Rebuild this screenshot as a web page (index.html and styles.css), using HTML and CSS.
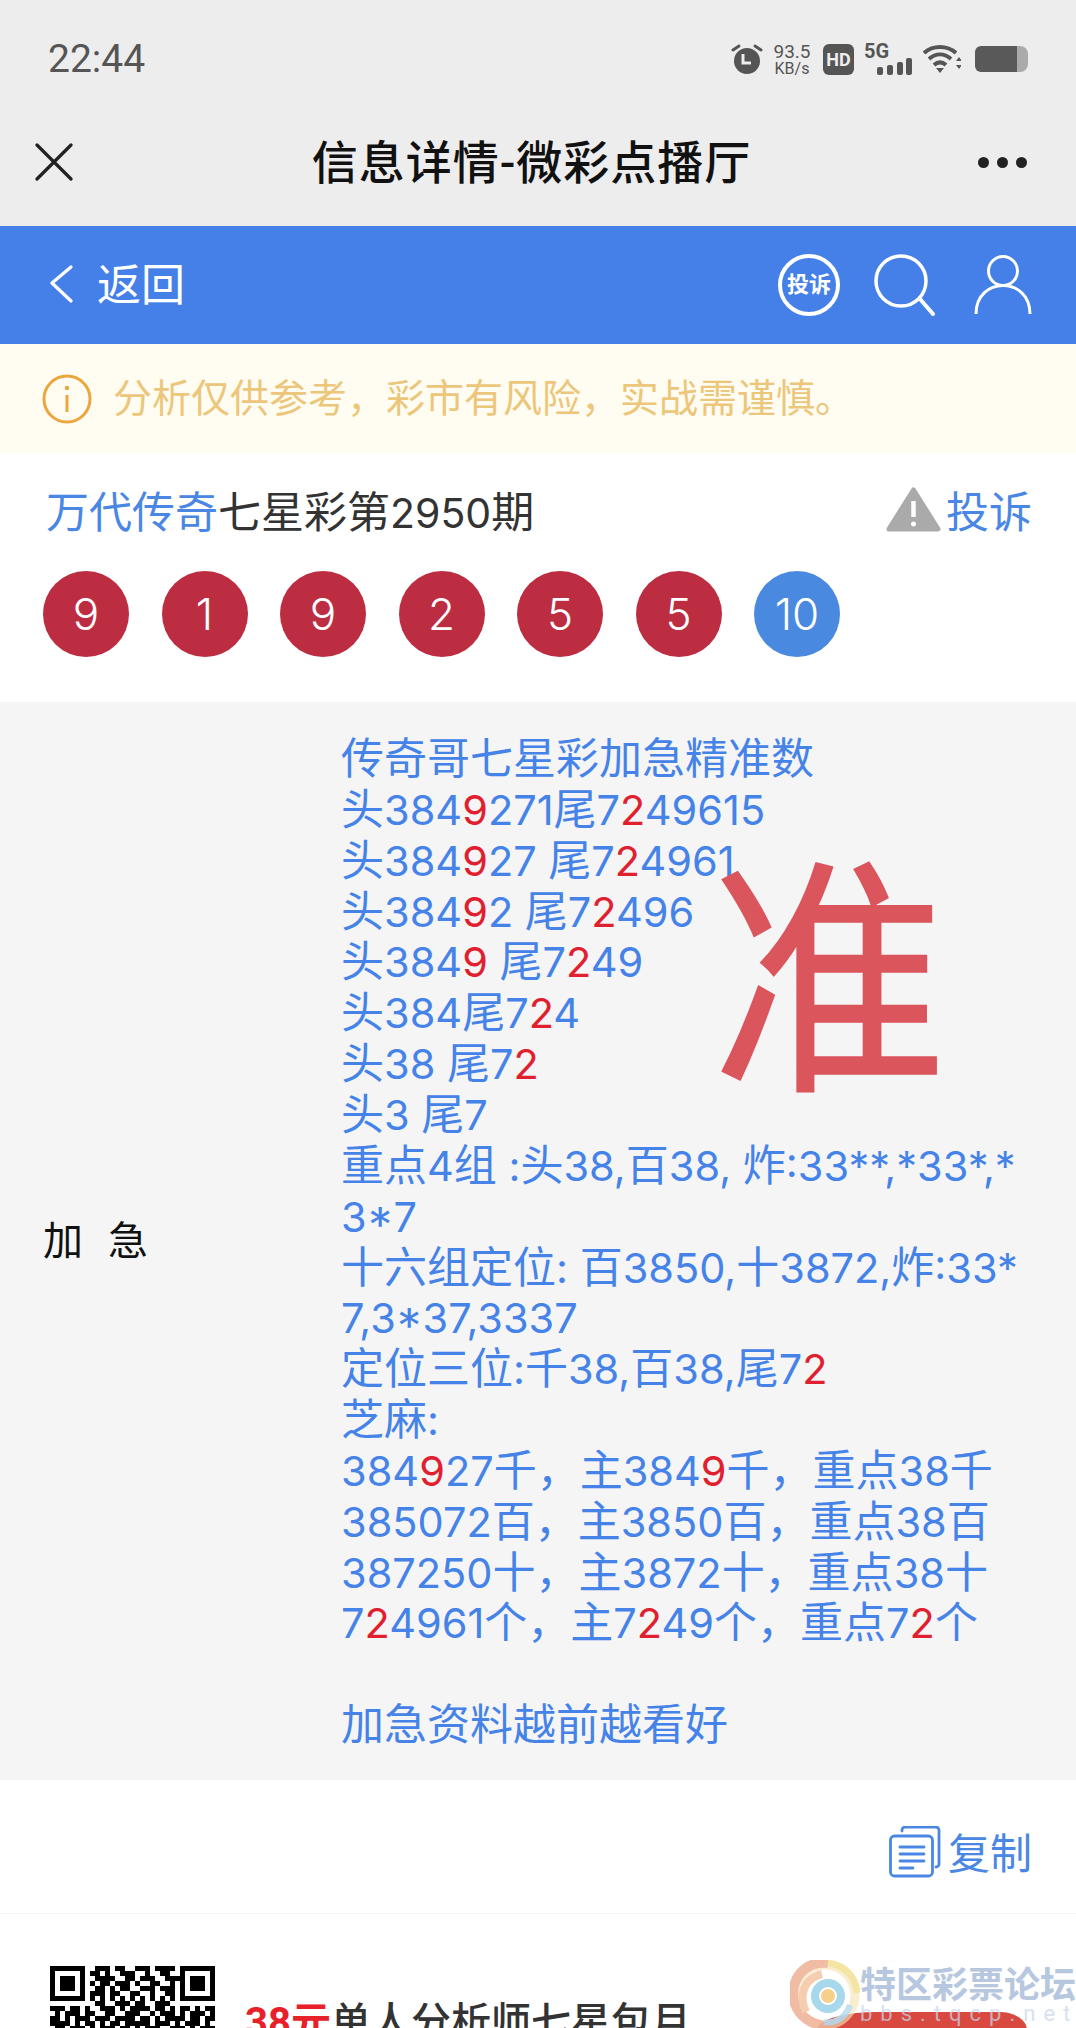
FILE: index.html
```html
<!DOCTYPE html>
<html lang="zh">
<head>
<meta charset="utf-8">
<title>信息详情-微彩点播厅</title>
<link rel="stylesheet" href="styles.css">
</head>
<body>
<div class="page">
  <header class="top">
    <div class="status">
      <span class="time">22:44</span>
      <div class="status-icons">
        <svg class="ic-alarm" width="32" height="32" viewBox="0 0 32 32"><circle cx="16" cy="18" r="13" fill="#555"/><path d="M12 11v9h8" fill="none" stroke="#eee" stroke-width="3"/><path d="M2 7l6-4M30 7l-6-4" stroke="#555" stroke-width="3" stroke-linecap="round"/></svg>
        <div class="speed"><span class="speed-num">93.5</span><span class="speed-unit">KB/s</span></div>
        <span class="hd">HD</span>
        <div class="sig">
          <span class="sig-5g">5G</span>
          <svg class="sig-bars" width="35" height="17" viewBox="0 0 35 17"><g fill="#555"><rect x="0" y="9" width="6" height="8" rx="2"/><rect x="10" y="7" width="6" height="10" rx="2"/><rect x="20" y="4" width="6" height="13" rx="2"/><rect x="29" y="0" width="6" height="17" rx="2"/></g></svg>
        </div>
        <svg class="ic-wifi" width="38" height="30" viewBox="0 0 38 30"><g fill="none" stroke="#555" stroke-width="4"><path d="M1 9C10 1 24 1 33 9"/><path d="M6 15C13 9 21 9 28 15"/><path d="M11 21C15 17.500 19 17.500 23 21"/></g><path d="M13 24h8l-4 5z" fill="#555"/><path d="M36 13l-3 4h6zM36 25l-3-4h6z" fill="#555"/></svg>
        <div class="battery"><div class="battery-fill"></div><div class="battery-tip"></div></div>
      </div>
    </div>
    <div class="nav">
      <svg class="ic-close" width="38" height="38" viewBox="0 0 38 38"><path d="M2 2l34 34M36 2L2 36" stroke="#222" stroke-width="3.200" stroke-linecap="round"/></svg>
      <h1 class="nav-title">信息详情-微彩点播厅</h1>
      <div class="dots"><i></i><i></i><i></i></div>
    </div>
  </header>

  <div class="bar">
    <svg class="ic-back" width="24" height="38" viewBox="0 0 24 38"><path d="M22 2L3 18l19 18" fill="none" stroke="#fff" stroke-width="3.200" stroke-linecap="round" stroke-linejoin="round"/></svg>
    <span class="back-text">返回</span>
    <div class="bar-actions">
      <span class="report-badge">投诉</span>
      <svg class="ic-search" width="62" height="62" viewBox="0 0 62 62"><circle cx="27" cy="27" r="25" fill="none" stroke="#fff" stroke-width="3.500"/><path d="M46 45l13 15" stroke="#fff" stroke-width="4" stroke-linecap="round"/></svg>
      <svg class="ic-user" width="58" height="62" viewBox="0 0 58 62"><circle cx="29" cy="17" r="14.500" fill="none" stroke="#fff" stroke-width="3"/><path d="M2 60C2 22 56 22 56 60" fill="none" stroke="#fff" stroke-width="3"/></svg>
    </div>
  </div>

  <div class="notice">
    <svg width="50" height="50" viewBox="0 0 50 50"><circle cx="25" cy="25" r="23" fill="none" stroke="#eda63d" stroke-width="3"/><circle cx="25" cy="14" r="2.200" fill="#eda63d"/><path d="M25 21v17" stroke="#eda63d" stroke-width="3"/></svg>
    <span class="notice-text">分析仅供参考，彩市有风险，实战需谨慎。</span>
  </div>

  <section class="head">
    <div class="head-row">
      <div class="head-title"><span class="blue">万代传奇</span>七星彩第<span class="num">2950</span>期</div>
      <div class="report">
        <svg width="55" height="45" viewBox="0 0 55 45"><path d="M27.500 3L52 42H3z" fill="#aaa" stroke="#aaa" stroke-width="5" stroke-linejoin="round"/><path d="M27.500 14v16" stroke="#fff" stroke-width="4.500"/><circle cx="27.500" cy="37" r="2.500" fill="#fff"/></svg>
        <span class="report-text">投诉</span>
      </div>
    </div>
    <div class="balls">
      <span class="ball">9</span><span class="ball">1</span><span class="ball">9</span><span class="ball">2</span><span class="ball">5</span><span class="ball">5</span><span class="ball ball-blue">10</span>
    </div>
  </section>

  <section class="detail">
    <div class="detail-label">加 急</div>
    <div class="detail-text">
      <p><i>传奇哥七星彩加急精准数</i></p>
      <p><i>头</i>384<b>9</b>271<i>尾</i>7<b>2</b>49615</p>
      <p><i>头</i>384<b>9</b>27 <i>尾</i>7<b>2</b>4961</p>
      <p><i>头</i>384<b>9</b>2 <i>尾</i>7<b>2</b>496</p>
      <p><i>头</i>384<b>9</b> <i>尾</i>7<b>2</b>49</p>
      <p><i>头</i>384<i>尾</i>7<b>2</b>4</p>
      <p><i>头</i>38 <i>尾</i>7<b>2</b></p>
      <p><i>头</i>3 <i>尾</i>7</p>
      <p><i>重点</i>4<i>组</i> :<i>头</i>38,<i>百</i>38, <i>炸</i>:33**,*33*,*<br>3*7</p>
      <p><i>十六组定位</i>: <i>百</i>3850,<i>十</i>3872,<i>炸</i>:33*<br>7,3*37,3337</p>
      <p><i>定位三位</i>:<i>千</i>38,<i>百</i>38,<i>尾</i>7<b>2</b></p>
      <p><i>芝麻</i>:</p>
      <p>384<b>9</b>27<i>千，主</i>384<b>9</b><i>千，重点</i>38<i>千</i></p>
      <p>385072<i>百，主</i>3850<i>百，重点</i>38<i>百</i></p>
      <p>387250<i>十，主</i>3872<i>十，重点</i>38<i>十</i></p>
      <p>7<b>2</b>4961<i>个，主</i>7<b>2</b>49<i>个，重点</i>7<b>2</b><i>个</i></p>
      <p>&nbsp;</p>
      <p><i>加急资料越前越看好</i></p>
    </div>
    <div class="stamp">准</div>
  </section>

  <div class="copy-row">
    <svg class="ic-copy" width="52" height="52" viewBox="0 0 52 52"><g fill="none" stroke="#4a87e4" stroke-width="2.800" stroke-linecap="round" stroke-linejoin="round"><path d="M13 5V4a3 3 0 0 1 3-3h31a3 3 0 0 1 3 3v34a3 3 0 0 1-3 3"/><rect x="1.500" y="10" width="42" height="40" rx="4"/><path d="M11 21h24M11 28h24M11 35h24M11 42h13"/></g></svg>
    <span class="copy-text">复制</span>
  </div>

  <section class="promo">
    <svg class="qr" width="165" height="165" viewBox="0 0 33 33" shape-rendering="crispEdges">
      <g fill="none" stroke="#000">
        <path d="M.5.5h6v6h-6zM26.500.5h6v6h-6z"/>
        <path d="M9 .5h3M13 .5h2M17 .5h3M21 .5h4M8 1.500h2M11 1.500h1M14 1.500h3M19 1.500h1M22 1.500h2M9 2.500h4M15 2.500h2M18 2.500h3M23 2.500h3M8 3.500h1M10 3.500h2M13 3.500h3M17 3.500h1M20 3.500h2M24 3.500h1M9 4.500h2M12 4.500h1M14 4.500h2M18 4.500h3M22 4.500h3M8 5.500h3M12 5.500h2M16 5.500h2M20 5.500h1M23 5.500h2M8 6.500h1M10 6.500h1M12 6.500h1M14 6.500h1M16 6.500h1M18 6.500h1M20 6.500h1M22 6.500h1M24 6.500h1M9 7.500h2M13 7.500h3M17 7.500h2M21 7.500h3M0 8.500h3M4 8.500h2M7 8.500h1M10 8.500h3M14 8.500h1M16 8.500h4M21 8.500h2M24 8.500h1M26 8.500h2M29 8.500h1M31 8.500h2M1 9.500h1M3 9.500h3M7 9.500h2M11 9.500h2M15 9.500h3M20 9.500h1M22 9.500h3M26 9.500h1M28 9.500h3M32 9.500h1M0 10.500h2M3 10.500h1M5 10.500h3M9 10.500h3M13 10.500h4M18 10.500h2M21 10.500h1M23 10.500h4M28 10.500h2M31 10.500h2M0 11.500h4M5 11.500h1M7 11.500h2M10 11.500h1M12 11.500h2M15 11.500h5M21 11.500h3M25 11.500h1M27 11.500h3M31 11.500h1M1 12.500h2M4 12.500h3M8 12.500h1M10 12.500h3M14 12.500h2M17 12.500h1M19 12.500h3M24 12.500h3M28 12.500h1M30 12.500h3"/>
      </g>
      <g fill="#000"><rect x="2" y="2" width="3" height="3"/><rect x="28" y="2" width="3" height="3"/></g>
    </svg>
    <div class="promo-text"><span class="promo-price">38元</span>单人分析师七星包月</div>
    <div class="promo-btn"></div>
    <div class="mark">
      <svg class="mark-logo" width="70" height="70" viewBox="0 0 70 70"><g fill="none"><circle cx="35" cy="35" r="30" stroke="#f6e3b4" stroke-width="9" opacity=".7"/><path d="M34 66C12 62 0 46 4 26C8 10 22 1 38 3" stroke="#efb59a" stroke-width="10"/><path d="M38 3C54 5 66 16 67 33" stroke="#f5e39c" stroke-width="7"/><path d="M16 52C8 36 14 18 32 14" stroke="#f3c9a6" stroke-width="8"/><path d="M60 45C56 58 44 64 34 62" stroke="#b8dff0" stroke-width="6"/><circle cx="38" cy="36" r="13" stroke="#9fd4ea" stroke-width="8"/><circle cx="38" cy="36" r="7" fill="#f6cb7e"/></g></svg>
      <div class="mark-words">
        <div class="mark-cn">特区彩票论坛</div>
        <div class="mark-en">bbs.tqcp.net</div>
      </div>
    </div>
  </section>
</div>
</body>
</html>
```
FILE: styles.css
```css
* { box-sizing: border-box; }
html, body { margin: 0; padding: 0; background: #fff; }
body { font-family: Roboto, "Noto Sans CJK SC", sans-serif; }
.page { width: 1076px; height: 2028px; overflow: hidden; position: relative; background: #fff; }

.top { background: #ededed; height: 226px; }
.status { height: 118px; display: flex; align-items: center; justify-content: space-between; padding: 0 46px 0 48px; }
.time { font-size: 39px; color: #555; }
.status-icons { display: flex; align-items: center; }
.ic-alarm { margin-right: 8px; }
.speed { display: flex; flex-direction: column; align-items: center; width: 42px; margin-right: 10px; color: #555; }
.speed-num { font-size: 19px; line-height: 18px; }
.speed-unit { font-size: 16px; line-height: 15px; }
.hd { width: 31px; height: 31px; background: #555; color: #eee; border-radius: 6px; font-size: 18px; font-weight: 700; line-height: 31px; text-align: center; margin-right: 10px; }
.sig { width: 48px; height: 31px; position: relative; margin-right: 11px; }
.sig-5g { position: absolute; left: 0; top: -3px; font-size: 20px; font-weight: 700; line-height: 20px; color: #555; }
.sig-bars { position: absolute; right: 0; bottom: 0; }
.ic-wifi { margin-right: 14px; }
.battery { width: 55px; height: 26px; display: flex; }
.battery-fill { width: 42px; background: #595959; border-radius: 6px 0 0 6px; }
.battery-tip { width: 11px; background: #aaa; border-radius: 0 8px 8px 0; margin: 0; }

.nav { height: 88px; display: flex; align-items: center; justify-content: space-between; padding: 0 49px 0 35px; }
.nav-title { margin: 2px 0 0; padding-left: 12px; font-size: 46px; letter-spacing: 1px; font-weight: 500; color: #111; line-height: 88px; }
.dots { display: flex; gap: 8px; }
.dots i { width: 11px; height: 11px; border-radius: 50%; background: #222; }

.bar { height: 118px; background: #4480e7; display: flex; align-items: center; padding: 0 44px 0 49px; color: #fff; }
.ic-back { margin-right: 24px; margin-top: -2px; }
.back-text { font-size: 44px; margin-top: -6px; }
.bar-actions { margin-left: auto; display: flex; align-items: center; }
.report-badge { width: 62px; height: 62px; border-radius: 50%; border: 4px solid #fff; font-size: 22px; font-weight: 700; line-height: 54px; text-align: center; white-space: nowrap; margin-right: 34px; }
.ic-search { margin-right: 38px; }

.notice { height: 110px; background: #fffdf1; display: flex; align-items: center; padding-left: 42px; gap: 21px; }
.notice-text { font-size: 39px; color: #ecc67b; padding-bottom: 8px; }

.head { height: 248px; padding: 29px 44px 0 43px; }
.head-row { display: flex; align-items: center; justify-content: space-between; height: 52px; padding-left: 3px; }
.head-title { font-size: 43px; color: #333; white-space: nowrap; }
.num { font-family: Inter, sans-serif; font-size: 41px; }
.blue { color: #4a87e4; }
.report { display: flex; align-items: center; gap: 5px; }
.report-text { font-size: 43px; color: #4a87e4; }
.balls { display: flex; gap: 32.500px; margin-top: 36px; }
.ball { width: 86px; height: 86px; border-radius: 50%; background: #bd2d42; color: #fff; font-family: Inter, sans-serif; font-size: 44px; font-weight: 300; line-height: 86px; text-align: center; }
.ball-blue { background: #4a89e0; }

.detail { height: 1078px; background: #f5f5f5; position: relative; display: flex; align-items: center; padding-left: 43px; }
.detail-label { width: 298px; margin-top: -6px; font-size: 40px; word-spacing: 15px; color: #111; white-space: pre; }
.detail-text { width: 710px; padding-top: 3px; font-family: Inter, sans-serif; font-size: 41.500px; line-height: 50.850px; color: #4583e8; white-space: nowrap; }
.detail-text p { margin: 0; }
.detail-text i { font-family: "Noto Sans CJK SC", sans-serif; font-style: normal; font-size: 43px; line-height: 0; }
.detail-text b { font-weight: 400; color: #e0202f; }
.stamp { position: absolute; left: 711px; top: 144px; font-size: 236px; line-height: 280px; color: #db555d; -webkit-text-stroke: 1.500px #db555d; transform: scaleY(1.060); transform-origin: 50% 50%; }

.copy-row { height: 134px; padding: 7px 44px 0 0; border-bottom: 1px solid #f3f3f3; display: flex; align-items: center; justify-content: flex-end; gap: 7px; }
.ic-copy { margin-top: 4px; }
.copy-text { font-size: 42px; color: #4a87e4; }

.promo { position: relative; display: flex; padding: 52px 0 0 50px; }
.qr { flex: none; }
.promo-text { margin: 24px 0 0 30px; font-size: 40px; font-weight: 500; color: #333; white-space: nowrap; }
.promo-price { color: #e8202a; font-weight: 700; }
.promo-btn { position: absolute; left: 817px; top: 98px; width: 210px; height: 40px; background: #d9493f; border-radius: 60px 28px 0 0 / 18px 18px 0 0; }
.mark { position: absolute; left: 790px; top: 46px; display: flex; gap: 0; opacity: .9; }
.mark-words { padding-top: 8px; white-space: nowrap; }
.mark-cn { font-size: 36px; line-height: 36px; font-weight: 700; color: #b0c2dd; }
.mark-en { font-size: 22px; line-height: 20px; letter-spacing: 8px; color: #c9d6ea; opacity: .8; }
```
